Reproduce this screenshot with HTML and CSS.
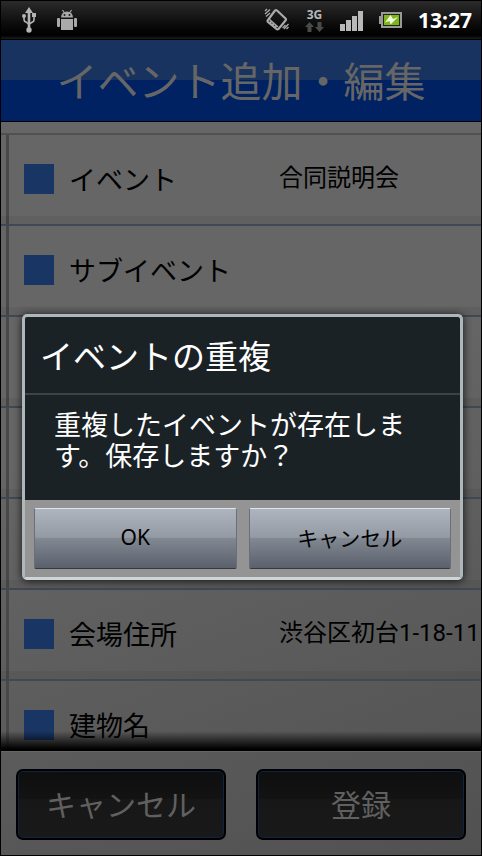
FILE: index.html
```html
<!DOCTYPE html>
<html lang="ja">
<head>
    <meta charset="UTF-8">
    <meta name="viewport" content="width=device-width, initial-scale=1">
    <title>イベント追加・編集</title>
    <link rel="stylesheet" href="styles.css">
</head>
<body>
    <div class="screen">
        <div class="status-bar">
            <div class="status-left">
                <!-- USB -->
                <svg width="14" height="26" viewBox="0 0 14 26">
                    <g fill="none" stroke="#b4b4b4" stroke-width="1.6">
                        <path d="M7 4v19" stroke-width="2.6"/>
                        <path d="M2 9v3.5q0 2 2 2.500l3 2.500M12 8v5q0 1.500-1.500 2L7 17"/>
                    </g>
                    <g fill="#b4b4b4">
                        <path d="M7 0l4 6H3z"/>
                        <circle cx="2" cy="9" r="2"/>
                        <path d="M10 6h4v4h-4z"/>
                        <circle cx="7" cy="23" r="2.700"/>
                    </g>
                </svg>
                <!-- Android -->
                <svg width="20" height="22" viewBox="0 0 20 22" fill="#aaa">
                    <path d="M4 8.500a6 6 0 0 1 12 0z"/>
                    <path d="M5.500 1l2 3M14.500 1l-2 3" stroke="#aaa" stroke-width="1.200"/>
                    <circle cx="7.500" cy="6" r="1" fill="#222"/>
                    <circle cx="12.500" cy="6" r="1" fill="#222"/>
                    <path d="M4 10h12v11H4z"/>
                    <rect x="0" y="9" width="3" height="9" rx="1"/>
                    <rect x="17" y="9" width="3" height="9" rx="1"/>
                </svg>
            </div>
            <div class="status-right">
                <!-- Vibrate -->
                <svg width="25" height="24" viewBox="0 0 25 24">
                    <g fill="none" stroke="#aaa">
                        <path d="M11 2.500q1-1 2 0l8.500 8q1 1 0 2l-7 8.500q-1 1-2 0L4 14q-1-1 0-2z" stroke-width="2.200"/>
                        <path d="M5 11l9 8" stroke-width="1.500"/>
                        <path d="M1 6l5-4.500M2 8.500L6 5M1 3l2-2M20 21l4.500-5M18.500 20l3-3M22.500 21l2-2" stroke-width="1.300"/>
                    </g>
                    <g fill="#aaa">
                        <circle cx="6.500" cy="14.500" r="1.200"/>
                        <circle cx="9" cy="16.500" r="1.200"/>
                        <circle cx="11.500" cy="18.500" r="1.200"/>
                    </g>
                </svg>
                <div class="network">
                    <span>3G</span>
                    <svg width="19" height="10" viewBox="0 0 19 10" fill="#4a4a4a">
                        <path d="M4.500 0L9 5H6.500v5h-4V5H0z"/>
                        <path d="M14.500 10L10 5h2.500V0h4v5H19z"/>
                    </svg>
                </div>
                <!-- Signal -->
                <svg width="23" height="22" viewBox="0 0 23 22" fill="#b8b8b8">
                    <path d="M0 15h5v7H0zM6 11h5v11H6zM12 7h5v15h-5zM18 2h5v20h-5z"/>
                </svg>
                <!-- Battery -->
                <svg width="23" height="16" viewBox="0 0 23 16">
                    <path d="M2 0h21v16H2v-4H0V4h2z" fill="#999"/>
                    <path d="M4 2h17v12H4z" fill="#1d2a08"/>
                    <path d="M5 3h15v10H5z" fill="#7fb51c"/>
                    <path d="M11.500 3L6 10.500l4.500-1.500 1 3.500L19 5l-5 2z" fill="#f0fbd8"/>
                </svg>
                <span class="clock">13:27</span>
            </div>
        </div>

        <header class="title-bar">
            <h1>イベント追加・編集</h1>
        </header>

        <main class="event-list">
            <dl>
                <div class="row">
                    <dt>イベント</dt>
                    <dd>合同説明会</dd>
                </div>
                <div class="row">
                    <dt>サブイベント</dt>
                    <dd></dd>
                </div>
                <div class="row"></div>
                <div class="row"></div>
                <div class="row"></div>
                <div class="row">
                    <dt>会場住所</dt>
                    <dd>渋谷区初台1-18-11</dd>
                </div>
                <div class="row">
                    <dt>建物名</dt>
                    <dd></dd>
                </div>
            </dl>
        </main>

        <footer class="actions">
            <button type="button">キャンセル</button>
            <button type="button">登録</button>
        </footer>

        <div class="overlay">
            <div class="dialog" role="alertdialog" aria-labelledby="dialogTitle" aria-describedby="dialogMessage">
                <h2 id="dialogTitle">イベントの重複</h2>
                <p id="dialogMessage">重複したイベントが存在します。保存しますか？</p>
                <div class="dialog-buttons">
                    <button type="button">OK</button>
                    <button type="button">キャンセル</button>
                </div>
            </div>
        </div>
    </div>
</body>
</html>
```
FILE: styles.css
```css
* { box-sizing: border-box; }
body {
    margin: 0;
    background: #000;
    color: #000;
    font-family: 'Noto Sans', 'Noto Sans CJK JP', sans-serif;
}
h1, h2, p, dl, dd { margin: 0; font-weight: normal; }
button {
    font-family: inherit;
    padding: 0 0 4px;
    cursor: pointer;
}
svg { display: block; }
.screen {
    position: relative;
    display: flex;
    flex-direction: column;
    height: 100vh;
    border: 1px solid #000;
    overflow: hidden;
    background: linear-gradient(160deg, #666 45%, #515151);
}

/* status bar */
.status-bar {
    flex: none;
    display: flex;
    justify-content: space-between;
    align-items: center;
    height: 39px;
    padding: 0 9px 0 21px;
    border-bottom: 1px solid #000;
    background: linear-gradient(#2b2b2b, #0c0c0c 60%, #000 90%, #1c1c1c);
}
.status-left {
    display: flex;
    align-items: center;
    gap: 21px;
}
.status-right {
    display: flex;
    align-items: center;
    gap: 16px;
}
.network {
    display: flex;
    flex-direction: column;
    align-items: center;
    gap: 1px;
    color: #b8b8b8;
    font-size: 12px;
    font-weight: bold;
    line-height: 12px;
}
.clock {
    color: #fff;
    font-family: 'Open Sans', 'Noto Sans', sans-serif;
    font-size: 21px;
    font-weight: bold;
    line-height: 38px;
}

/* title bar */
.title-bar {
    flex: none;
    border-bottom: 1px solid #000;
    background: linear-gradient(#193360 50%, #002262 50%);
    color: #666;
    text-align: center;
}
.title-bar h1 {
    padding-top: 2px;
    font-size: 41px;
    line-height: 79px;
}

/* event fields */
.event-list {
    position: relative;
    flex: 1;
    min-height: 0;
    overflow: hidden;
    padding-top: 11px;
}
.event-list::after {
    content: "";
    position: absolute;
    left: 0;
    right: 0;
    bottom: 0;
    height: 20px;
    background: linear-gradient(transparent, #000 90%);
}
.event-list dl {
    border-top: 2px solid #505050;
    background: linear-gradient(90deg, transparent 5px, #484848 5px, #484848 8px, transparent 8px);
}
.row {
    display: flex;
    height: 91px;
    padding: 29px 0 0 23px;
    border-bottom: 2px solid #3f4854;
    background: linear-gradient(transparent 81px, rgba(0, 0, 0, 0.06) 81px);
    line-height: 30px;
    white-space: nowrap;
}
.row dt {
    flex: none;
    display: flex;
    gap: 15px;
    width: 255px;
    font-size: 27px;
    line-height: 32px;
}
.row dt::before {
    content: "";
    width: 30px;
    height: 30px;
    background: #193564;
}
.row dd {
    font-family: Roboto, 'Noto Sans CJK JP', sans-serif;
    font-size: 24px;
    line-height: 28px;
}

/* bottom buttons */
.actions {
    flex: none;
    display: flex;
    gap: 30px;
    padding: 17px 15px 15px;
    border-top: 1px solid #666;
}
.actions button {
    flex: 1;
    height: 71px;
    border: 2px solid #000;
    border-radius: 7px;
    box-shadow: inset 0 0 0 1px #0e2444;
    background: linear-gradient(#0e0e0e, #131313 42%, #171717 42%, #191919);
    color: #606060;
    font-size: 30px;
}

/* dialog */
.overlay {
    position: absolute;
    top: 38px;
    left: 0;
    right: 0;
    bottom: 0;
    display: flex;
    align-items: center;
    padding: 0 18px 0 21px;
}
.dialog {
    flex: 1;
    border: 3px solid #b0b7ba;
    border-bottom-color: #cdd5d7;
    border-radius: 5px;
    background: #1b2226;
    box-shadow: 0 1px 8px rgba(0, 0, 0, 0.8);
    color: #fff;
}
.dialog h2 {
    padding: 4px 15px 0;
    border-bottom: 2px solid #3c4245;
    font-size: 33px;
    line-height: 72px;
}
.dialog p {
    padding: 14px 29px 29px;
    font-size: 27px;
    line-height: 31px;
}
.dialog-buttons {
    display: flex;
    gap: 12px;
    padding: 8px 9px;
    background: #949494;
}
.dialog-buttons button {
    flex: 1;
    height: 61px;
    border: 1px solid #697079;
    border-top-color: #dfe4e8;
    border-bottom-color: #343a42;
    border-radius: 2px;
    background: linear-gradient(#aeb5be, #949aa4 48%, #828892 50%, #5b616c);
    color: #000;
    font-size: 21px;
}
```
